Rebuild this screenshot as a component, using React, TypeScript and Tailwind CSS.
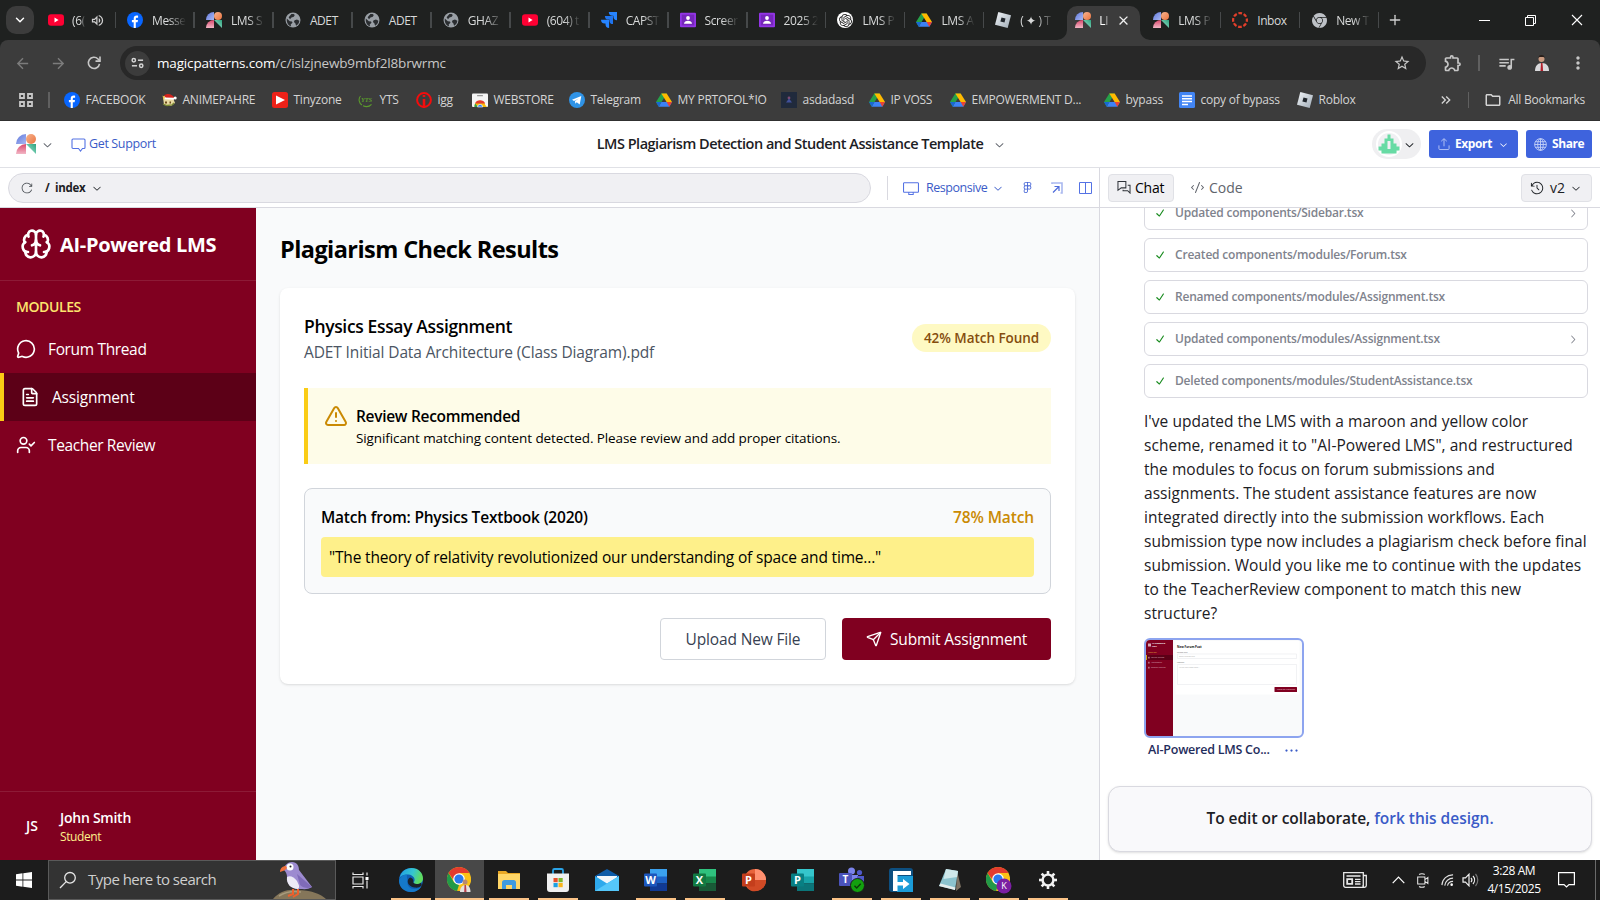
import React from 'react';
import { Brain, MessageCircle, FileText, UserCheck, AlertTriangle, Send, Plus, ChevronDown } from 'lucide-react';
import { RxReload, RxChevronDown, RxChevronRight, RxDesktop, RxFigmaLogo, RxCode, RxCounterClockwiseClock, RxCheck, RxDotsHorizontal } from 'react-icons/rx';
import { SiOpenai, SiGooglechrome } from 'react-icons/si';
import { MdArrowBack, MdArrowForward, MdStarBorder, MdMoreVert, MdOutlineExtension, MdQueueMusic, MdOutlineFolder, MdOutlineVolumeUp, MdClose, MdKeyboardDoubleArrowRight } from 'react-icons/md';

/* ---------- Site icons ---------- */

const Youtube = () => (
  <svg viewBox="0 0 16 16" className="size-4"><rect y="2.3" width="16" height="11.4" rx="3" fill="#ff0033" /><path d="M6.5 5.6v4.8L10.6 8z" fill="#fff" /></svg>
);
const Facebook = () => (
  <svg viewBox="0 0 16 16" className="size-4"><circle cx="8" cy="8" r="8" fill="#0866ff" /><path d="M6.7 16V10.3H4.9V8h1.8V6.7c0-2.2 1-3.2 3.1-3.2.4 0 1 .1 1.3.2v2H10c-.9 0-1.2.4-1.2 1.3v1h2.2l-.4 2.3H8.8V16z" fill="#fff" /></svg>
);
const Magic = ({ className = 'size-4' }: { className?: string }) => (
  <svg viewBox="0 0 20 20" className={className}>
    <defs>
      <linearGradient id="mgA" x1="0" y1="0" x2="1" y2="1"><stop stopColor="#5f78dc" /><stop offset="1" stopColor="#a9b8f2" /></linearGradient>
      <linearGradient id="mgB" x1="0" y1="0" x2="1" y2="1"><stop stopColor="#f6b48f" /><stop offset="1" stopColor="#ec7440" /></linearGradient>
      <linearGradient id="mgC" x1="0" y1="0" x2="0" y2="1"><stop stopColor="#d9486c" /><stop offset="1" stopColor="#f2b6c5" /></linearGradient>
      <linearGradient id="mgD" x1="1" y1="0" x2="0" y2="1"><stop stopColor="#2fa37f" /><stop offset="1" stopColor="#a8ecd6" /></linearGradient>
    </defs>
    <path d="M0 10A10 10 0 0 1 10 0v10z" fill="url(#mgA)" />
    <circle cx="15" cy="5" r="5" fill="url(#mgB)" />
    <path d="M0 20A10 10 0 0 1 10 10v10z" fill="url(#mgC)" />
    <path d="M10 10h10v10z" fill="url(#mgD)" />
  </svg>
);
const Globe = () => (
  <svg viewBox="0 0 16 16" className="size-4"><circle cx="8" cy="8" r="7.5" fill="#9aa0a6" /><path d="M1.800 6.600l3 2.600 2.200.2.500 1.400-1.800 1.600.4 2.200C3.400 13.800 1.400 11 1.800 6.600zM6.400 2l2.200.1 1.200 1-1 1.700-2.300.6L5 7.200 3.600 5.200zM9.600 8.200l2.400-.6 2.300 1.200c0 2.200-1.400 4-3.200 5l-.8-2.600-1.400-1.200z" fill="#2b2e31" /></svg>
);
const Jira = () => (
  <svg viewBox="0 0 16 16" className="size-4" fill="#2684ff"><path d="M7.800 0H16v8.200a3.700 3.700 0 0 1-3.600-3.700V3.700h-.9A3.700 3.700 0 0 1 7.800 0z" /><path d="M3.900 3.900h8.100v8.200a3.700 3.700 0 0 1-3.600-3.700v-.8h-.9a3.700 3.700 0 0 1-3.600-3.700z" fill="#1f74ee" /><path d="M0 7.800h8.100V16a3.700 3.700 0 0 1-3.600-3.700v-.8h-.9A3.700 3.700 0 0 1 0 7.800z" fill="#2684ff" /></svg>
);
const Classroom = () => (
  <svg viewBox="0 0 16 16" className="size-4"><rect y=".8" width="16" height="14.4" rx="1" fill="#9334e6" /><rect x="1.800" y="2.600" width="12.400" height="10.800" fill="#7627bb" /><circle cx="8" cy="6" r="1.900" fill="#fff" /><path d="M4 11.800c0-2 2-3 4-3s4 1 4 3z" fill="#fff" /></svg>
);
const ChatGpt = () => (
  <span className="flex size-4 items-center justify-center rounded-full bg-white"><SiOpenai size={13} color="#222" /></span>
);
const Drive = () => (
  <svg viewBox="0 0 16 16" className="size-4"><path d="M5.300 1.500h5.400L5.400 10.200 2.700 14.700 0 10z" fill="#26a148" /><path d="M5.300 1.500h5.400L16 10h-5.400z" fill="#ffba00" /><path d="M5.400 10H16l-2.700 4.700H2.700z" fill="#3c82f6" /><path d="M0 10h5.400l-2.700 4.700z" fill="#1967d2" /><path d="M10.600 10H16l-2.700 4.700z" fill="#ea4335" /></svg>
);
const Roblox = () => (
  <svg viewBox="0 0 16 16" className="size-4"><defs><linearGradient id="rbx" x1="0" y1="0" x2="1" y2="1"><stop stopColor="#f2f5f8" /><stop offset="1" stopColor="#9fabb6" /></linearGradient></defs><path d="M3.300 0L16 3.300 12.700 16 0 12.700z" fill="url(#rbx)" /><path d="M6.500 5.400l4 1.100-1 4-4.100-1z" fill="#20262c" /></svg>
);
const Canvas = () => (
  <svg viewBox="0 0 16 16" className="size-4"><circle cx="8" cy="8" r="6.900" fill="none" stroke="#e13f2b" strokeWidth="2.200" strokeDasharray="3.700 1.720" strokeDashoffset="1.850" /></svg>
);
const ChromeGray = () => <SiGooglechrome size={15} color="#bdc1c6" />;
const Anime = () => (
  <svg viewBox="0 0 16 16" className="size-4"><path d="M2 5l3-2 7 3 2 5-4 3-7-1z" fill="#e8d9a0" /><path d="M3 3.500C6 1 11 1.500 13.500 6L5 6z" fill="#d3221c" /><path d="M3 5.500l10 .3v2L4 7.200z" fill="#fff" /><circle cx="14.200" cy="6" r="1.500" fill="#fff" /><path d="M1.500 3.500L4 5 2.500 8z" fill="#e7c84b" /><path d="M4 9.500h2v2H4zM8.500 9.500h1.500v2H8.500z" fill="#6a4a1c" /><path d="M2 12l4 1.500 5-.5 2-2" stroke="#7a8a33" strokeWidth="1.300" fill="none" /></svg>
);
const Tiny = () => (
  <svg viewBox="0 0 16 16" className="size-4"><rect width="16" height="16" rx="2.500" fill="#ed2118" /><path d="M4 3.500L13 8l-9 4.500z" fill="#fff" /></svg>
);
const Yts = () => (
  <svg viewBox="0 0 16 16" className="size-4"><path d="M2.500 4A6 6 0 0 0 4 13M5 13.800c3 1.300 6.500.7 8.500-1.500" fill="none" stroke="#5b9a2c" strokeWidth="1.100" /><text x="3" y="10" fontSize="6.500" fontStyle="italic" fontWeight="700" fontFamily="Liberation Serif" fill="#5b9a2c">YTS</text></svg>
);
const Igg = () => (
  <svg viewBox="0 0 16 16" className="size-4"><circle cx="8" cy="8" r="6.900" fill="none" stroke="#f20d0d" strokeWidth="2" /><path d="M8 3v2M8 7v9" stroke="#f20d0d" strokeWidth="2.600" /></svg>
);
const Webstore = () => (
  <svg viewBox="0 0 16 16" className="size-4"><rect y="1.500" width="16" height="13.500" rx="1" fill="#f4f4f4" /><rect x="5" y="3" width="6" height="1.300" rx=".6" fill="#999" /><path d="M2.500 15a5.500 5.500 0 0 1 10.900-1.700L15 15z" fill="#fbbc05" /><path d="M3 11.500a5.600 5.600 0 0 1 10.200 0H8z" fill="#e33b2e" /><path d="M2.500 15c-.1-1.500.2-2.500.7-3.500L6 15z" fill="#2e9e4c" /><path d="M5.500 15a2.600 2.600 0 0 1 5.200 0z" fill="#2f7df6" stroke="#fff" strokeWidth=".6" /></svg>
);
const Telegram = () => (
  <svg viewBox="0 0 16 16" className="size-4"><circle cx="8" cy="8" r="8" fill="#2f93e6" /><path d="M3 7.800l9.300-3.700-1.600 8.300-3-2.200-1.400 1.500-.3-2.600L10 6.500 5 9z" fill="#fff" /></svg>
);
const Asd = () => (
  <svg viewBox="0 0 16 16" className="size-4"><rect width="16" height="16" fill="#202a3c" /><circle cx="8" cy="6" r="1.400" fill="#7e4a72" /><path d="M5 10.500L8 6.500l3 4z" fill="#41509a" /></svg>
);
const Docs = () => (
  <svg viewBox="0 0 16 16" className="size-4"><rect width="16" height="16" rx="1.500" fill="#4285f4" /><path d="M3 4h10M3 6.800h10M3 9.600h10M3 12.400h6" stroke="#fff" strokeWidth="1.500" /></svg>
);

/* ---------- Browser chrome ---------- */

type Tab = { icon: React.ReactNode; label: string; fade?: boolean };
const tabs: Tab[] = [
  { icon: <Facebook />, label: 'Messe', fade: true },
  { icon: <Magic />, label: 'LMS S', fade: true },
  { icon: <Globe />, label: 'ADET' },
  { icon: <Globe />, label: 'ADET' },
  { icon: <Globe />, label: 'GHAZ', fade: true },
  { icon: <Youtube />, label: '(604) t', fade: true },
  { icon: <Jira />, label: 'CAPST', fade: true },
  { icon: <Classroom />, label: 'Screer', fade: true },
  { icon: <Classroom />, label: '2025 2', fade: true },
  { icon: <ChatGpt />, label: 'LMS P', fade: true },
  { icon: <Drive />, label: 'LMS A', fade: true },
  { icon: <Roblox />, label: '( ✦ ) T', fade: true },
];
const tailTabs: Tab[] = [
  { icon: <Magic />, label: 'LMS P', fade: true },
  { icon: <Canvas />, label: 'Inbox' },
  { icon: <ChromeGray />, label: 'New T', fade: true },
];

const TabItem = ({ icon, label, fade = false, last = false }: Tab & { last?: boolean }) => (
  <div className="flex h-full w-[78.95px] shrink-0 items-center">
    <div className="ml-[11px] flex size-4 shrink-0 items-center justify-center">{icon}</div>
    <div className={`ml-[9px] w-[34px] whitespace-nowrap pt-px text-[12px] tracking-[-0.4px] text-[#d8dada] ${fade ? '[mask-image:linear-gradient(to_right,black_50%,transparent)]' : ''}`}>{label}</div>
    <div className={last ? 'hidden' : 'ml-auto h-4 w-[1.5px] bg-[#46494a]'} />
  </div>
);

const TabStrip = () => (
  <div className="flex h-10 shrink-0 items-center bg-[#1f2120]">
    <div className="ml-[6px] flex size-7 items-center justify-center rounded-[10px] bg-[#3c3c3c] text-white"><ChevronDown size={14} strokeWidth={2.500} /></div>
    <div className="flex h-full w-[82px] items-center">
      <div className="ml-[14px] size-4"><Youtube /></div>
      <div className="ml-2 w-[13px] whitespace-nowrap pt-px text-[12px] tracking-[-0.3px] text-[#d8dada] [mask-image:linear-gradient(to_right,black_65%,transparent)]">(6(</div>
      <MdOutlineVolumeUp size={15} className="ml-[5px] text-[#d0d0d0]" />
      <div className="ml-auto h-4 w-[1.500px] bg-[#46494a]" />
    </div>
    {tabs.map((t, i) => <TabItem key={i} {...t} last={i === tabs.length - 1} />)}
    <div className="flex h-full w-[79px] items-end">
      <svg width="10" height="10" viewBox="0 0 10 10" className="-ml-[6px] shrink-0"><path d="M10 0A10 10 0 0 1 0 10h10z" fill="#3c3c3c" /></svg>
      <div className="flex h-[34px] w-[73px] shrink-0 items-center rounded-t-[10px] bg-[#3c3c3c] pb-[6px]">
        <div className="ml-2 size-4"><Magic /></div>
        <div className="ml-[8px] w-[10px] whitespace-nowrap pt-px text-[12px] tracking-[-0.3px] text-white [mask-image:linear-gradient(to_right,black_60%,transparent)]">LI</div>
        <MdClose size={15} className="ml-[7px] text-[#f0f0f0]" />
      </div>
      <svg width="10" height="10" viewBox="0 0 10 10" className="shrink-0"><path d="M0 0A10 10 0 0 0 10 10H0z" fill="#3c3c3c" /></svg>
    </div>
    {tailTabs.map((t, i) => <TabItem key={i} {...t} />)}
    <Plus size={16} className="ml-[8px] text-[#d0d0d0]" />
    <div className="ml-auto mr-[17px] flex items-center gap-[35px] text-white">
      <svg width="11" height="11"><path d="M0 5.500h11" stroke="#fff" /></svg>
      <svg width="11" height="11" fill="none" stroke="#fff"><path d="M.5 2.500h8v8h-8zM2.500 2.500v-2h8v8h-2" /></svg>
      <svg width="12" height="12" stroke="#fff" strokeWidth="1.100"><path d="M1 1l10 10M11 1L1 11" /></svg>
    </div>
  </div>
);

const Toolbar = () => (
  <div className="bg-[#1f2120]">
    <div className="flex h-[46px] items-center rounded-t-[8px] bg-[#3c3c3c] pl-[14px] text-[#c7c7c7]">
      <MdArrowBack size={17} className="text-[#7c7c7c]" />
      <MdArrowForward size={17} className="ml-[19px] text-[#7c7c7c]" />
      <svg viewBox="0 0 16 16" className="ml-[19px] size-4" fill="none" stroke="#c7c7c7" strokeWidth="1.600"><path d="M13.500 8.800A5.600 5.600 0 1 1 12 4l1.800 1.800" /><path d="M14 1.500v4.600H9.500" /></svg>
      <div className="ml-[18px] flex h-[34px] w-[1306px] items-center rounded-full bg-[#282828]">
        <div className="ml-[5px] flex size-[25px] items-center justify-center rounded-full bg-[#3c3c3c]">
          <svg viewBox="0 0 14 12" width="13" height="12" fill="none" stroke="#d6d6d6" strokeWidth="1.600"><circle cx="3" cy="3" r="1.800" /><path d="M7.500 3H13" /><circle cx="11" cy="9" r="1.800" /><path d="M1 9h5.500" /></svg>
        </div>
        <div className="ml-[7px] whitespace-nowrap text-[13.5px] tracking-[-0.16px] text-[#c7c7c7]"><span className="text-white">magicpatterns.com</span>/c/islzjnewb9mbf2l8brwrmc</div>
        <MdStarBorder size={18} className="ml-auto mr-[15px]" />
      </div>
      <MdOutlineExtension size={20} className="ml-[17px]" />
      <div className="ml-[15px] h-4 w-[1.500px] bg-[#606060]" />
      <MdQueueMusic size={19} className="ml-[17px]" />
      <svg viewBox="0 0 16 18" width="16" height="18" className="ml-[18px]"><path d="M1 17c0-5 2.500-8 7-8s7 3 7 8z" fill="#d9d9dc" /><circle cx="7.500" cy="5" r="3" fill="#c99a80" /><path d="M4.500 4a3 3 0 0 1 6 0l-1-1h-4z" fill="#2a201c" /><path d="M7 9h1.500l.6 8H6.500z" fill="#b3202c" /></svg>
      <MdMoreVert size={20} className="ml-[18px]" />
    </div>
  </div>
);

type Mark = { icon: React.ReactNode; label: string; w: string };
const marks: Mark[] = [
  { icon: <Facebook />, label: 'FACEBOOK', w: 'w-[97px]' },
  { icon: <Anime />, label: 'ANIMEPAHRE', w: 'w-[111px]' },
  { icon: <Tiny />, label: 'Tinyzone', w: 'w-[86px]' },
  { icon: <Yts />, label: 'YTS', w: 'w-[58px]' },
  { icon: <Igg />, label: 'igg', w: 'w-[56px]' },
  { icon: <Webstore />, label: 'WEBSTORE', w: 'w-[97px]' },
  { icon: <Telegram />, label: 'Telegram', w: 'w-[87px]' },
  { icon: <Drive />, label: 'MY PRTOFOL*IO', w: 'w-[125px]' },
  { icon: <Asd />, label: 'asdadasd', w: 'w-[88px]' },
  { icon: <Drive />, label: 'IP VOSS', w: 'w-[81px]' },
  { icon: <Drive />, label: 'EMPOWERMENT D...', w: 'w-[154px]' },
  { icon: <Drive />, label: 'bypass', w: 'w-[75px]' },
  { icon: <Docs />, label: 'copy of bypass', w: 'w-[118px]' },
  { icon: <Roblox />, label: 'Roblox', w: 'w-[90px]' },
];

const Bookmarks = () => (
  <div className="flex h-[35px] shrink-0 items-center border-b border-[#303030] bg-[#3c3c3c] pb-[6px] pl-[19px] text-[12px] tracking-[-0.24px] text-[#d4d4d4]">
    <svg width="14" height="14" fill="none" stroke="#c7c7c7" strokeWidth="1.800"><path d="M1 1h4v4H1zM9 1h4v4H9zM1 9h4v4H1zM9 9h4v4H9z" /></svg>
    <div className="ml-[15px] mr-[14px] h-4 w-[1.500px] bg-[#606060]" />
    {marks.map((m) => (
      <div key={m.label + m.w} className={`flex shrink-0 items-center gap-[6px] whitespace-nowrap ${m.w}`}>{m.icon}<span>{m.label}</span></div>
    ))}
    <MdKeyboardDoubleArrowRight size={16} className="ml-auto" />
    <div className="ml-[14px] mr-[15px] h-4 w-[1.500px] bg-[#606060]" />
    <MdOutlineFolder size={18} />
    <div className="ml-[6px] mr-[15px] whitespace-nowrap">All Bookmarks</div>
  </div>
);

/* ---------- Editor header ---------- */

const EditorHeader = () => (
  <header className="grid h-[47px] shrink-0 grid-cols-[1fr_auto_1fr] items-center border-b border-[#e0e1e6] bg-white">
    <div className="flex items-center pl-4">
      <Magic className="size-5" />
      <RxChevronDown size={13} className="ml-[5px] text-[#60646c]" />
      <svg viewBox="0 0 15 15" width="15" height="15" className="ml-[17px]" fill="none" stroke="#5472e4" strokeWidth="1.100"><path d="M2 2h11a1 1 0 0 1 1 1v7.500a1 1 0 0 1-1 1h-1.500L9.500 14 7.500 11.500H2a1 1 0 0 1-1-1V3a1 1 0 0 1 1-1z" /></svg>
      <span className="ml-[3px] text-[12.5px] tracking-[-0.36px] text-[#3a5bc7]">Get Support</span>
    </div>
    <div className="flex items-center pl-[3px] text-[14.5px] font-semibold text-[#1c2024]">
      <span className="tracking-[-0.5px]">LMS Plagiarism Detection and Student Assistance Template</span>
      <RxChevronDown size={13} className="ml-[10px] text-[#60646c]" />
    </div>
    <div className="flex items-center justify-end gap-2 pr-2">
      <div className="flex h-[30px] w-[49px] items-center rounded-full bg-[#efeff1] pl-[4px]">
        <svg viewBox="0 0 26 26" className="size-[26px]"><circle cx="13" cy="13" r="13" fill="#fff" /><circle cx="13" cy="13" r="11" fill="#f0f0f3" /><path d="M11.500 3.500h3v4h3v5h3v3h3v4h-3v3h-15v-3h-3v-4h3v-3h3v-5h3zM11.500 10v8h3v-8z" fillRule="evenodd" fill="#67dba4" /></svg>
        <RxChevronDown size={13} className="ml-[1px] text-[#1c2024]" />
      </div>
      <div className="flex h-7 w-[89px] items-center rounded-[3px] bg-[#3e63dd] pl-[9px] text-[12px] font-bold text-white">
        <svg viewBox="0 0 13 14" width="12" height="14" fill="none" stroke="#b9c7f5"><path d="M6.500 9.500V1.500M3.500 4l3-2.800L9.500 4M1 8.500v3.500a1 1 0 0 0 1 1h9a1 1 0 0 0 1-1V8.500" /></svg>
        <span className="ml-[5px] tracking-[-0.400px]">Export</span>
        <RxChevronDown size={11} className="ml-[6px]" />
      </div>
      <div className="flex h-7 w-[66px] items-center rounded-[3px] bg-[#3e63dd] pl-[8px] text-[12px] font-bold text-white">
        <svg viewBox="0 0 14 14" width="13" height="13" fill="none" stroke="#c3cff7"><circle cx="7" cy="7" r="6.300" /><ellipse cx="7" cy="7" rx="3" ry="6.300" /><path d="M7 .7v12.600M.7 7h12.600M1.500 4h11M1.500 10h11" /></svg>
        <span className="ml-[5px] tracking-[-0.400px]">Share</span>
      </div>
    </div>
  </header>
);

const PreviewBar = () => (
  <div className="flex h-[40px] shrink-0 items-center border-b border-[#d9d9e0] bg-white pl-2">
    <div className="flex h-[30px] w-[863px] items-center rounded-full border border-[#d9d9e0] bg-[#f0f0f3] pl-[12px] text-[#1c2024]">
      <RxReload size={12} className="text-[#43484e]" />
      <span className="ml-[12px] text-[11.5px] font-bold tracking-[-0.25px]">/&nbsp; index</span>
      <RxChevronDown size={12} className="ml-[5px]" />
    </div>
    <div className="ml-4 h-6 w-px bg-[#d9d9e0]" />
    <RxDesktop size={16} className="ml-[15px] text-[#5472e4]" />
    <span className="ml-[7px] w-[62px] whitespace-nowrap pt-px text-[12.5px] tracking-[-0.45px] text-[#3a5bc7]">Responsive</span>
    <RxChevronDown size={12} className="ml-[4px] text-[#3a5bc7]" />
    <RxFigmaLogo size={13} className="ml-[17px] text-[#4565d6]" />
    <svg viewBox="0 0 12 12" width="12" height="12" className="ml-[17px]" fill="none" stroke="#4f6cdb"><path d="M1 2V1h10v10H9.500" stroke="#a9b8ef" strokeWidth="1.600" /><path d="M2 10.500l5.500-5.500M3.500 4.500H8V9" strokeWidth="1.200" /></svg>
    <svg viewBox="0 0 14 12" width="14" height="12" className="ml-[16px]" fill="none" stroke="#5472e4"><path d="M.5.500h12v11H.5zM6.500 .5v11" /></svg>
  </div>
);

/* ---------- LMS preview ---------- */

const Sidebar = () => (
  <aside className="flex w-64 shrink-0 flex-col bg-[#800020] text-[15.5px] text-white">
    <div className="flex h-[73px] items-center gap-2 border-b border-white/10 pl-5">
      <Brain size={32} />
      <span className="pt-px text-[20px] font-bold tracking-[-0.320px]">AI-Powered LMS</span>
    </div>
    <div className="flex h-[44px] items-end pb-[8px] pl-4 text-[14px] font-semibold leading-5 tracking-[-0.400px] text-[#fde56e]">MODULES</div>
    <div className="flex h-12 items-center pl-4"><MessageCircle size={20} /><span className="ml-3 pt-[2px] tracking-[-0.35px]">Forum Thread</span></div>
    <div className="flex h-12 items-center border-l-4 border-[#facc15] bg-[#5c0017] pl-4"><FileText size={20} /><span className="ml-3 pt-[2px] tracking-[-0.2px]">Assignment</span></div>
    <div className="flex h-12 items-center pl-4"><UserCheck size={20} /><span className="ml-3 pt-[2px] tracking-[-0.38px]">Teacher Review</span></div>
    <div className="mt-auto flex h-[69px] items-center border-t border-white/10 pl-4">
      <div className="flex size-8 items-center justify-center pb-[2px] text-[14px] font-semibold">JS</div>
      <div className="ml-3">
        <div className="text-[14px] font-semibold leading-5 tracking-[-0.25px]">John Smith</div>
        <div className="pt-px text-[12px] leading-4 tracking-[-0.4px] text-[#fef08a]">Student</div>
      </div>
    </div>
  </aside>
);

const Results = () => (
  <main className="min-w-0 flex-1 bg-[#f9fafb] pl-6 pr-6 pt-[25px] text-[15.5px] text-black">
    <h1 className="text-[23.5px] font-bold leading-8 tracking-[-0.570px]">Plagiarism Check Results</h1>
    <section className="mt-[23px] rounded-lg bg-white p-6 shadow-sm">
      <div className="flex items-center justify-between">
        <div>
          <h2 className="text-[17.5px] font-semibold leading-7 tracking-[-0.35px]">Physics Essay Assignment</h2>
          <p className="leading-6 tracking-[-0.13px] text-[#4b5563]">ADET Initial Data Architecture (Class Diagram).pdf</p>
        </div>
        <div className="flex h-7 w-[139px] items-center justify-center rounded-full bg-[#fef9c3] text-[13.5px] font-semibold tracking-[-0.05px] text-[#854d0e]"><span>42% Match Found</span></div>
      </div>
      <div className="mt-6 flex h-[76px] border-l-4 border-[#facc15] bg-[#fefce8] pl-4 pt-4">
        <AlertTriangle size={24} className="text-[#ca8a04]" />
        <div className="ml-2">
          <div className="font-semibold leading-[25px] tracking-[-0.3px]">Review Recommended</div>
          <div className="text-[13.5px] leading-[19px] tracking-[-0.1px]">Significant matching content detected. Please review and add proper citations.</div>
        </div>
      </div>
      <div className="mt-6 rounded-lg border border-[#d1d5db] bg-[#f9fafb] p-4">
        <div className="flex justify-between font-semibold leading-6"><span className="tracking-[-0.2px]">Match from: Physics Textbook (2020)</span><span className="tracking-[-0.13px] text-[#ca8a04]">78% Match</span></div>
        <div className="mt-2 rounded bg-[#fef08a] p-2 leading-6 tracking-[-0.17px]">"The theory of relativity revolutionized our understanding of space and time..."</div>
      </div>
      <div className="mt-6 flex justify-end gap-4 tracking-[-0.15px]">
        <button className="flex h-[42px] w-[166px] items-center justify-center rounded border border-[#d1d5db] text-[#374151]"><span className="pt-[2px]">Upload New File</span></button>
        <button className="flex h-[42px] w-[209px] items-center rounded bg-[#800020] pl-6 text-white"><Send size={16} /><span className="ml-2 pt-[2px]">Submit Assignment</span></button>
      </div>
    </section>
  </main>
);

/* ---------- Chat panel ---------- */

const changes = [
  { text: 'Updated components/Sidebar.tsx', more: true },
  { text: 'Created components/modules/Forum.tsx', more: false },
  { text: 'Renamed components/modules/Assignment.tsx', more: false },
  { text: 'Updated components/modules/Assignment.tsx', more: true },
  { text: 'Deleted components/modules/StudentAssistance.tsx', more: false },
];
const message = [
  "I've updated the LMS with a maroon and yellow color",
  'scheme, renamed it to "AI-Powered LMS", and restructured',
  'the modules to focus on forum submissions and',
  'assignments. The student assistance features are now',
  'integrated directly into the submission workflows. Each',
  'submission type now includes a plagiarism check before final',
  'submission. Would you like me to continue with the updates',
  'to the TeacherReview component to match this new',
  'structure?',
];

const Thumbnail = () => (
  <div className="flex h-[100px] w-[160px] overflow-hidden rounded-[6px] border-2 border-[#8da4ef] bg-[#f9fafb]">
    <svg viewBox="0 0 156 96" width="156" height="96" fontFamily="Open Sans">
      <rect width="27" height="96" fill="#800020" />
      <rect y="15" width="27" height="5" fill="#5c0017" /><rect y="15" width=".8" height="5" fill="#facc15" />
      <rect x="2" y="3.500" width="3" height="3" fill="#d9a9b5" />
      <g fill="#fff" fontSize="2.300" fontWeight="700"><text x="6" y="4.300">AI-Powered</text><text x="6" y="7.300">LMS</text></g>
      <text x="2" y="13.300" fontSize="1.800" fill="#e0b93a">MODULES</text>
      <g fill="#dcb3bf" fontSize="2"><text x="5" y="18.300">Forum Thread</text><text x="5" y="23.300">Assignment</text><text x="5" y="28.300">Teacher Review</text></g>
      <g fill="#b36a80"><rect x="2" y="16.800" width="1.700" height="1.700" /><rect x="2" y="21.800" width="1.700" height="1.700" /><rect x="2" y="26.800" width="1.700" height="1.700" /></g>
      <rect x="29.500" y="1" width="124" height="53.500" fill="#fff" />
      <text x="31" y="7.800" fontSize="3" fontWeight="700" fill="#111">New Forum Post</text>
      <g fill="#666" fontSize="1.900"><text x="31" y="12.600">Thread Title</text><text x="31" y="23">Content</text></g>
      <g fill="#aaa" fontSize="2"><text x="33" y="17.200">Enter thread title</text><text x="33" y="27.700">Write your post here...</text></g>
      <path d="M31.500 14h119v4.500h-119zM31.500 24.500h119v20h-119z" fill="none" stroke="#e7e9ec" strokeWidth=".6" />
      <rect x="128.500" y="47" width="22.500" height="5" rx=".5" fill="#800020" /><text x="131" y="50.300" fontSize="1.900" fill="#f0d5dc">Check for Plagiarism</text>
    </svg>
  </div>
);

const ChatPanel = () => (
  <section className="flex w-[501px] shrink-0 flex-col border-l border-[#d9d9e0] bg-white">
    <div className="flex h-[40px] shrink-0 items-center border-b border-[#d9d9e0] pl-2 pr-2 text-[14px]">
      <div className="flex h-7 w-[66px] items-center rounded-[4px] border border-[#e0e1e6] bg-[#f0f0f3] pl-[8px] text-black">
        <svg viewBox="0 0 15 14" width="14" height="13" fill="none" stroke="#30343a" strokeWidth="1.100"><path d="M1 .6h8.500v6.800H4.500L1 10zM11.500 4.500H14V13l-2.500-2.500H6.500V9.500" /></svg>
        <span className="ml-1 tracking-[-0.2px]">Chat</span>
      </div>
      <RxCode size={15} className="ml-[16px] text-[#60646c]" />
      <span className="ml-[4px] text-[#60646c]">Code</span>
      <div className="ml-auto flex h-7 w-[71px] items-center rounded-[4px] border border-[#e0e1e6] bg-[#f0f0f3] pl-[8px] text-[#1c2024]">
        <RxCounterClockwiseClock size={14} /><span className="ml-[6px]">v2</span><RxChevronDown size={12} className="ml-[5px]" />
      </div>
    </div>
    <div className="relative min-h-0 flex-1 overflow-hidden">
      <div className="-mt-[12px] flex flex-col gap-2 pl-11 pr-3">
        {changes.map((c) => (
          <div key={c.text} className="flex h-[34px] items-center rounded-[6px] border border-[#d9d9e0] pl-[8px] pr-[8px] text-[12px] font-semibold tracking-[-0.2px] text-[#80838d]">
            <RxCheck size={14} className="text-[#168a1c]" />
            <span className="ml-[8px]">{c.text}</span>
            {c.more && <RxChevronRight size={13} className="ml-auto" />}
          </div>
        ))}
      </div>
      <div className="mt-[11px] pl-11 text-[15.5px] leading-6 tracking-[0.04px] text-[#1c2024]">
        {message.map((m) => <div key={m} className="whitespace-nowrap"><span>{m}</span></div>)}
      </div>
      <div className="mt-[13px] w-[204px] pl-11">
        <Thumbnail />
        <div className="mt-[2px] flex w-[160px] items-center justify-between pl-1 pr-[5px] text-[12.5px] leading-5 text-[#1f2d5c]">
          <span className="whitespace-nowrap font-semibold tracking-[-0.250px]">AI-Powered LMS Co...</span><RxDotsHorizontal size={15} className="text-[#3a5bc7]" />
        </div>
      </div>
    </div>
    <div className="mx-2 mb-2 flex h-[66px] shrink-0 items-center justify-center rounded-[12px] border border-[#d9d9e0] bg-[#f9f9fb] text-[15.5px] font-semibold tracking-[-0.02px] text-[#1c2024] shadow-sm">
      <span>To edit or collaborate, <span className="text-[#3a5bc7]">fork this design.</span></span>
    </div>
  </section>
);

/* ---------- Taskbar ---------- */

const Edge = () => (
  <svg viewBox="0 0 24 24" className="size-6"><defs><linearGradient id="edA" x1="0" y1="0" x2="1" y2=".3"><stop stopColor="#1f9be6" /><stop offset=".6" stopColor="#35c6d0" /><stop offset="1" stopColor="#5fdc5e" /></linearGradient></defs><circle cx="12" cy="12" r="12" fill="#0f5fb5" /><path d="M.5 10C2 3.500 7 0 12.500 0 19.500 0 24 5 24 10.500c0 3.500-2.500 5.500-6 5.500-2.500 0-3.800-.8-3.300-1.800.9-1 .9-1.700.9-2.400C15.500 8.500 12 6.500 8.500 6.500 4.500 6.500 1.500 8 .5 10z" fill="url(#edA)" /><path d="M8.500 13c-1 4.500 2.500 8 7 8 3 0 5.500-1 7-3-2 4-6 6-10.500 6C5 24 0 19 0 12.500 1.500 8 5 6.500 8.500 6.500c-1.500 1 0 3.500 0 6.500z" fill="#1579c9" /><path d="M8.700 13c.3-2 1.300-3 2.500-3.500 2 .2 3.300 2 3.200 3.600-.8 1.400.7 2.900 3.100 2.900 2 0 3.500-.5 4.500-1.300l.8 2.500c-2 2.200-4.800 2.800-7.300 2.300C11.500 18.800 8.600 16.500 8.700 13z" fill="#1c1c1c" opacity=".9" /></svg>
);
const Chrome = ({ badge }: { badge: 'photo' | 'K' }) => (
  <svg viewBox="0 0 26 28" width="26" height="28" className="shrink-0">
    <circle cx="12" cy="13" r="12" fill="#fbc116" /><path d="M1.600 7A12 12 0 0 1 22.400 7H12z" fill="#e33b2e" /><path d="M1.600 7L7 16.200 12 19l-2 6A12 12 0 0 1 1.600 7z" fill="#229a48" /><path d="M1.600 7h10.400v6H6z" fill="#e33b2e" /><path d="M12 25l5.200-9L24 13a12 12 0 0 1-12 12z" fill="#fbc116" /><circle cx="12" cy="13" r="5.800" fill="#fff" /><circle cx="12" cy="13" r="4.600" fill="#2b79ee" />
    {badge === 'K' ? <><circle cx="18" cy="20" r="7.500" fill="#7b1fa2" /><text x="18" y="23" textAnchor="middle" fontSize="9" fontFamily="Open Sans" fill="#fff">K</text></> : <><path d="M13 26c0-4 2-7 5.500-7s5 3 5 7z" fill="#e4e1e1" /><circle cx="18" cy="16" r="2.500" fill="#b98a70" /><path d="M17.500 19h1.500l.5 7h-2.300z" fill="#b9404a" /></>}
  </svg>
);
const Explorer = () => (
  <svg viewBox="0 0 22 20" width="22" height="20"><path d="M0 1h8l2 2h12v16H0z" fill="#e9a825" /><path d="M0 4h22v15H0z" fill="#ffd667" /><path d="M4 19v-6.500A2.500 2.500 0 0 1 6.500 10h9a2.500 2.500 0 0 1 2.500 2.500V19h-4v-4H8v4z" fill="#3f9be0" /></svg>
);
const Store = () => (
  <svg viewBox="0 0 24 24" className="size-6"><path d="M7 6V2.500A1.500 1.500 0 0 1 8.500 1h7A1.500 1.500 0 0 1 17 2.500V6" stroke="#2ba4e8" strokeWidth="1.800" fill="none" /><path d="M1 5.500h22V21a3 3 0 0 1-3 3H4a3 3 0 0 1-3-3z" fill="#f0f0f0" /><path d="M7.500 10h4.200v4.200H7.500z" fill="#e8502a" /><path d="M12.500 10h4.200v4.200h-4.200z" fill="#7eb72a" /><path d="M7.500 15h4.200v4.200H7.500z" fill="#1ba0e2" /><path d="M12.500 15h4.200v4.200h-4.200z" fill="#f9b41c" /></svg>
);
const Mail = () => (
  <svg viewBox="0 0 24 24" className="size-6"><path d="M0 8l12-7 12 7v4H0z" fill="#0d5ba8" /><path d="M2 8h20v8H2z" fill="#f1f6fb" /><path d="M0 8l12 7.500L24 8v15H0z" fill="#2ea9ec" /><path d="M0 23L24 8v15z" fill="#55c7fa" /></svg>
);
type OfficeProps = { letter: string; a: string; b: string; c: string; tile: string; round?: boolean };
const Office = ({ letter, a, b, c, tile, round }: OfficeProps) => (
  <svg viewBox="0 0 24 24" className="size-6">
    {round ? <><circle cx="13" cy="12" r="11" fill={a} /><path d="M13 12h11a11 11 0 0 1-19 7.700z" fill={b} /><path d="M13 1a11 11 0 0 1 11 11H13z" fill={c} /></> : <><path d="M6 1h17v8H6z" fill={a} /><path d="M6 8.500h17v7H6z" fill={b} /><path d="M6 15.500h17V23H6z" fill={c} /></>}
    <rect y="5.500" width="13" height="13" rx="1" fill={tile} />
    <text x="6.500" y="16" textAnchor="middle" fontSize="11" fontWeight="700" fontFamily="Open Sans" fill="#fff">{letter}</text>
  </svg>
);
const Teams = () => (
  <svg viewBox="0 0 26 26" width="26" height="26"><circle cx="12.500" cy="4" r="3.500" fill="#7b83eb" /><circle cx="20.500" cy="5.500" r="2.600" fill="#5059c9" /><path d="M8 8h11v10H8z" fill="#7b83eb" /><path d="M18 9h7v7h-7z" fill="#5059c9" /><rect y="6" width="13" height="13" rx="1" fill="#4b53bc" /><text x="6.500" y="16.200" textAnchor="middle" fontSize="10" fontWeight="700" fontFamily="Open Sans" fill="#fff">T</text><circle cx="18.500" cy="18.500" r="7" fill="#13a10e" stroke="#1c1c1c" /><path d="M15.500 18.700l2.200 2.200 4-4.200" stroke="#0c3a0a" strokeWidth="1.400" fill="none" /></svg>
);
const FShare = () => (
  <svg viewBox="0 0 24 24" className="size-6"><rect width="24" height="24" rx="3" fill="#0d4f80" /><path d="M8 8h16v16H8z" fill="#1b9cd8" /><path d="M4 3h18v4H8.500v7H14v-3l6.500 5-6.500 5v-3.500H8.500V23H4z" fill="#fff" /></svg>
);
const Notepad = () => (
  <svg viewBox="0 0 24 24" className="size-6"><path d="M19 3l4 16-5 4z" fill="#7d7263" /><path d="M8 1l12 2-3 19-16-4z" fill="#8cc4cf" /><path d="M8 1l12 2-1 6-13.500 2z" fill="#cfe8ea" /><path d="M1 18l16 4 .4-2.500L2.500 15.500z" fill="#e5eded" /></svg>
);
const Gear = () => (
  <svg viewBox="0 0 20 20" className="size-5"><g fill="#f2f2f2"><path d="M8.700 1h2.600v18H8.700z" /><path d="M8.700 1h2.600v18H8.700z" transform="rotate(45 10 10)" /><path d="M8.700 1h2.600v18H8.700z" transform="rotate(90 10 10)" /><path d="M8.700 1h2.600v18H8.700z" transform="rotate(135 10 10)" /><circle cx="10" cy="10" r="6.600" /></g><circle cx="10" cy="10" r="4.200" fill="#1c1c1c" /></svg>
);
const Puffin = () => (
  <svg viewBox="0 0 54 38" width="54" height="38"><path d="M0 38c6-7 14-10 24-9 14 0 24 4 29 9z" fill="#85765a" /><path d="M6 35c8-5 16-5 22-4" stroke="#a89b7c" strokeWidth="1.500" fill="none" /><path d="M11 9c0-5 4-8 8-8 5 0 7 4 7 8l13 17c-4 3-9 2-12 2-9 0-13-5-13-12 0-3-1-5-3-7z" fill="#9d8bd0" /><path d="M14 16c3-2 7 0 10 4 2 4 3 6 1 8-7 0-12-5-11-12z" fill="#eceaf6" /><path d="M24 13l15 13c-4 2-9 1-12-2z" fill="#7f6bb8" /><circle cx="17" cy="6" r="3.500" fill="#fff" /><circle cx="17.500" cy="5.500" r="1" fill="#222" /><path d="M13 5c-3 0-6 2-6 6 3-1 6-2 7-4z" fill="#f0703c" /><path d="M20 28v5l-5 2M25 28v5l-5 3" stroke="#f0602c" strokeWidth="2" fill="none" /></svg>
);

type App = { icon: React.ReactNode; open?: boolean; active?: boolean };
const apps: App[] = [
  { icon: <Edge />, open: true },
  { icon: <Chrome badge="photo" />, open: true, active: true },
  { icon: <Explorer />, open: true },
  { icon: <Store />, open: true },
  { icon: <Mail /> },
  { icon: <Office letter="W" a="#3ba1ee" b="#1d62c6" c="#113a94" tile="#1d57bd" />, open: true },
  { icon: <Office letter="X" a="#2fc27e" b="#17884b" c="#195a37" tile="#127a43" />, open: true },
  { icon: <Office letter="P" a="#e8643c" b="#d14a25" c="#ff9070" tile="#c43e1c" round /> },
  { icon: <Office letter="P" a="#35c6cc" b="#17a3a8" c="#0b7579" tile="#087f83" /> },
  { icon: <Teams />, open: true },
  { icon: <FShare />, open: true },
  { icon: <Notepad />, open: true },
  { icon: <Chrome badge="K" />, open: true },
  { icon: <Gear />, open: true },
];

const Taskbar = () => (
  <footer className="flex h-10 shrink-0 bg-[#1c1c1c] text-white">
    <div className="flex w-12 items-center justify-center">
      <svg viewBox="0 0 16 16" className="size-4" fill="#fff"><path d="M0 2.200l6.500-.9v6.300H0zM7.300 1.200L16 0v7.600H7.300zM0 8.400h6.500v6.300L0 13.800zM7.300 8.400H16V16l-8.700-1.200z" /></svg>
    </div>
    <div className="flex w-[288px] items-center border border-[#5a5a5a] bg-[#333333] pl-[10px]">
      <svg viewBox="0 0 18 18" width="18" height="18" fill="none" stroke="#e6e6e6" strokeWidth="1.300"><circle cx="11" cy="6.800" r="5.300" /><path d="M7.200 10.600L1 17" /></svg>
      <span className="ml-[11px] whitespace-nowrap pb-[2px] text-[15px] tracking-[-0.520px] text-[#cfcfcf]">Type here to search</span>
      <div className="ml-auto mr-[8px] self-end"><Puffin /></div>
    </div>
    <div className="flex w-[50px] items-center justify-center pr-[2px]">
      <svg width="17" height="17" fill="none" stroke="#e8e8e8" strokeWidth="1.200"><path d="M1 .5v2h10v-2M1 5h10v7H1zM1 16.500v-2h10v2M15 .5v3M15 8.500v8" /><path d="M13.500 5h3v3h-3z" fill="#fff" stroke="none" /></svg>
    </div>
    {apps.map((a, i) => (
      <div key={i} className={`flex w-[49px] flex-col items-center ${a.active ? 'bg-[#484848]' : ''}`}>
        <div className="flex h-[38px] items-center justify-center pt-[2px]">{a.icon}</div>
        {a.open && <div className={a.active ? 'h-[2px] w-[49px] bg-[#fbc387]' : 'h-[2px] w-10 bg-[#fbc387]'} />}
      </div>
    ))}
    <div className="ml-auto flex items-center">
      <svg viewBox="0 0 24 16" width="24" height="16" fill="none" stroke="#e8e8e8" strokeWidth="1.300"><path d="M.7.700h19.600v14.600H2.500A1.800 1.800 0 0 1 .7 13.500zM20.300 3.500h3v10a1.800 1.800 0 0 1-3.600 0M3.500 4h14M12 7.300h5.500M12 9.700h5.500M12 12h5.500" /><path d="M4.200 7.200h5v4.600h-5z" strokeWidth="1.800" /></svg>
      <svg width="13" height="8" className="ml-[25px]" fill="none" stroke="#fff" strokeWidth="1.200"><path d="M.7 7.200L6.500 1.200l5.800 6" /></svg>
      <svg viewBox="0 0 14 18" width="12" height="17" className="ml-[12px]" fill="none" stroke="#e8e8e8" strokeWidth="1.200"><path d="M.8 4.800h8.400v8.400H.8zM9.200 8l3.500-2.500v7L9.200 10M2.500 2c1.500-1.300 5-1.300 6.500 0M2.500 16c1.500 1.300 5 1.300 6.500 0" /></svg>
      <svg viewBox="0 0 14 14" width="13" height="14" className="ml-[12px]" fill="none" stroke="#e0e0e0" strokeWidth="1.200"><path d="M1 12.500A11.500 11.500 0 0 1 13 1.500M4 13A9 9 0 0 1 13 5M7 13a6 6 0 0 1 6-4.500" /><circle cx="11.500" cy="12" r="1.400" fill="#fff" stroke="none" /></svg>
      <svg viewBox="0 0 17 14" width="17" height="14" className="ml-[8px]" fill="none" stroke="#f0f0f0" strokeWidth="1.200"><path d="M1 4.800h2.500L7 1.200v11.600L3.500 9.200H1zM9 5a3 3 0 0 1 0 4M11 3a6 6 0 0 1 0 8" /><path d="M13.500 1a9 9 0 0 1 0 12" stroke="#777" /></svg>
      <div className="ml-[7px] w-[56px] text-center text-[12px] leading-[18px] tracking-[-0.400px]"><div>3:28 AM</div><div>4/15/2025</div></div>
      <svg viewBox="0 0 17 16" width="17" height="16" className="ml-[16px]" fill="none" stroke="#fff" strokeWidth="1.200"><path d="M.6.600h15.800v12H11L8.500 15 6 12.600H.6z" /></svg>
      <div className="ml-[20px] mr-[4px] h-10 w-px bg-[#6a6a6a]" />
    </div>
  </footer>
);

export default function App() {
  return (
    <div className="flex h-[900px] w-[1600px] flex-col overflow-hidden bg-white font-['Open_Sans','Noto_Sans',sans-serif] text-[16px]">
      <TabStrip />
      <Toolbar />
      <Bookmarks />
      <EditorHeader />
      <div className="flex min-h-0 flex-1">
        <div className="flex min-w-0 flex-1 flex-col">
          <PreviewBar />
          <div className="flex min-h-0 flex-1"><Sidebar /><Results /></div>
        </div>
        <ChatPanel />
      </div>
      <Taskbar />
    </div>
  );
}
